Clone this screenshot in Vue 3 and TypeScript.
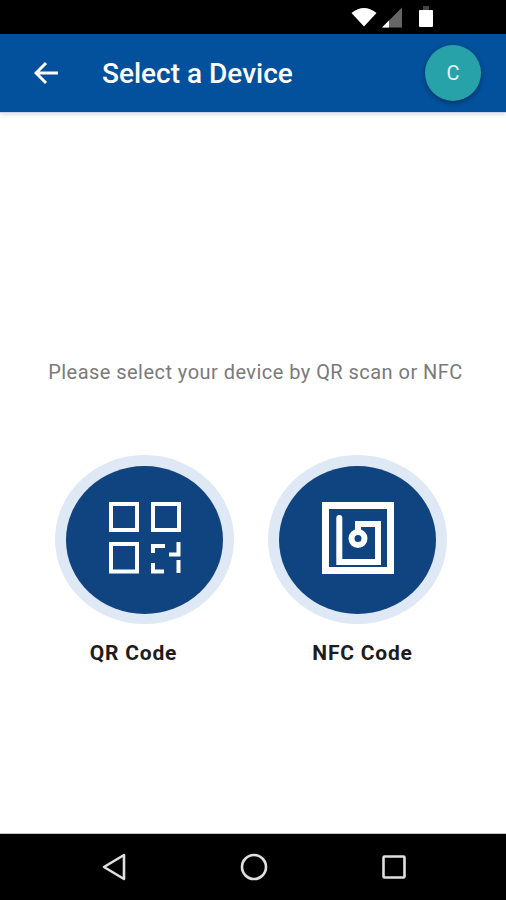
<script setup lang="ts">
interface Option { label: string; kind: 'qr' | 'nfc' }
const options: Option[] = [
  { label: 'QR Code', kind: 'qr' },
  { label: 'NFC Code', kind: 'nfc' }
]
</script>

<template>
  <div class="screen">
    <div class="status">
      <svg class="wifi" width="26" height="20" viewBox="0 0 26 20"><path d="M0.5 6 Q13 -4 25.5 6 L13 19.5 Z" fill="#fff" /></svg>
      <svg class="signal" width="22" height="21" viewBox="0 0 22 21">
        <path d="M21 0.5 V20.5 H1 Z" fill="#666" />
        <path d="M8 13.5 V20.5 H1 Z" fill="#fff" />
      </svg>
      <svg class="battery" width="16" height="22" viewBox="0 0 16 22">
        <rect x="5" y="0" width="6" height="4" fill="#444" />
        <rect x="1" y="4" width="14" height="17" rx="1" fill="#fff" />
      </svg>
    </div>

    <header class="bar">
      <svg class="back" width="24" height="24" viewBox="0 0 24 24" fill="none" stroke="#fff" stroke-width="3">
        <path d="M24 12 H2.5 M12 2 L2 12 L12 22" />
      </svg>
      <h1 class="title">Select a Device</h1>
      <div class="avatar">C</div>
    </header>

    <main class="content">
      <p class="hint">Please select your device by QR scan or NFC</p>
      <div class="options">
        <div v-for="o in options" :key="o.kind" class="option" :class="o.kind">
          <div class="ring">
            <div class="disc">
              <svg v-if="o.kind === 'qr'" class="glyph" width="72" height="72" viewBox="0 0 72 72" fill="none" stroke="#fff" stroke-width="4">
                <rect x="2" y="2" width="26" height="26" />
                <rect x="44" y="2" width="26" height="26" />
                <rect x="2" y="42" width="26" height="27.500" />
                <path d="M44 51 V44 H56" />
                <path d="M69.500 40 V52.500 H60" />
                <path d="M44 61 V69.500 H55" />
                <path d="M69.500 58 V71" />
              </svg>
              <svg v-else class="glyph" width="72" height="72" viewBox="0 0 72 72" fill="none" stroke="#fff">
                <rect x="3.500" y="3.500" width="65" height="65" stroke-width="7" />
                <path d="M17.300 16 V60 H56 V22 H36 V30" stroke-width="6" stroke-linecap="round" />
                <circle cx="36" cy="36.500" r="6.500" stroke-width="6" />
              </svg>
            </div>
          </div>
          <span class="label">{{ o.label }}</span>
        </div>
      </div>
    </main>

    <nav class="nav">
      <svg width="24" height="28" viewBox="0 0 24 28" fill="none" stroke="#e0e0e0" stroke-width="2.6" stroke-linejoin="round"><path d="M22 2 V26 L2 14 Z" /></svg>
      <svg width="28" height="28" viewBox="0 0 28 28" fill="none" stroke="#e0e0e0" stroke-width="2.600"><circle cx="14" cy="14" r="12" /></svg>
      <svg width="24" height="24" viewBox="0 0 24 24" fill="none" stroke="#e0e0e0" stroke-width="2.6" stroke-linejoin="round"><rect x="1.500" y="1.500" width="21" height="21" rx="1" /></svg>
    </nav>
  </div>
</template>

<style>
html, body { margin: 0; background: #fff; }
</style>

<style scoped>
.screen {
  width: 506px;
  height: 900px;
  display: flex;
  flex-direction: column;
  font-family: Roboto, sans-serif;
  overflow: hidden;
}
.status {
  height: 34px;
  flex: none;
  background: #000;
  display: flex;
  align-items: flex-start;
  padding-left: 351px;
  box-sizing: border-box;
}
.wifi { margin-top: 7px; }
.signal { margin: 7px 0 0 4px; }
.battery { margin: 6px 0 0 15px; }
.bar {
  height: 78px;
  flex: none;
  background: #03509c;
  box-shadow: 0 1px 0 #c9d6ea, 0 3px 4px rgba(0, 0, 0, 0.12);
  display: flex;
  align-items: center;
  padding: 0 25px 0 34px;
  box-sizing: border-box;
  position: relative;
}
.back { flex: none; }
.title {
  margin: 2px 0 0 44px;
  flex: 1;
  color: #fff;
  font-size: 28px;
  font-weight: 500;
  line-height: 30px;
  white-space: nowrap;
}
.avatar {
  width: 56px;
  height: 56px;
  flex: none;
  border-radius: 50%;
  background: #27a2a8;
  color: #e8f7f7;
  font-size: 20px;
  display: flex;
  align-items: center;
  justify-content: center;
  box-shadow: 0 2px 5px rgba(0, 0, 0, 0.35);
}
.content {
  flex: 1;
  display: flex;
  flex-direction: column;
  align-items: center;
  background: #fff;
}
.hint {
  margin: 248px 0 0 5px;
  height: 24px;
  line-height: 24px;
  color: #7a7a7a;
  font-size: 20px;
  letter-spacing: 0.46px;
  white-space: nowrap;
}
.options {
  margin-top: 71px;
  width: 100%;
  display: flex;
  gap: 34px;
  padding-left: 55px;
  box-sizing: border-box;
}
.option {
  width: 179px;
  display: flex;
  flex-direction: column;
  align-items: center;
}
.ring {
  width: 179px;
  height: 169px;
  flex: none;
  border-radius: 50%;
  background: #dfe8f5;
  display: flex;
  align-items: center;
  justify-content: center;
}
.disc {
  width: 157px;
  height: 148px;
  border-radius: 50%;
  background: #104480;
  display: flex;
  align-items: center;
  justify-content: center;
}
.glyph { margin-bottom: 3px; }
.label {
  margin-top: 14px;
  font-size: 21px;
  font-weight: 700;
  line-height: 30px;
  letter-spacing: 0.8px;
  color: #1c1c1c;
}
.nfc .label { margin-left: 10px; }
.qr .label { margin-right: 22px; }
.nav {
  height: 67px;
  flex: none;
  background: #000;
  border-top: 1px solid #c4c4c4;
  box-sizing: border-box;
  display: flex;
  align-items: center;
  justify-content: space-between;
  padding: 0 100px 0 102px;
}
</style>
